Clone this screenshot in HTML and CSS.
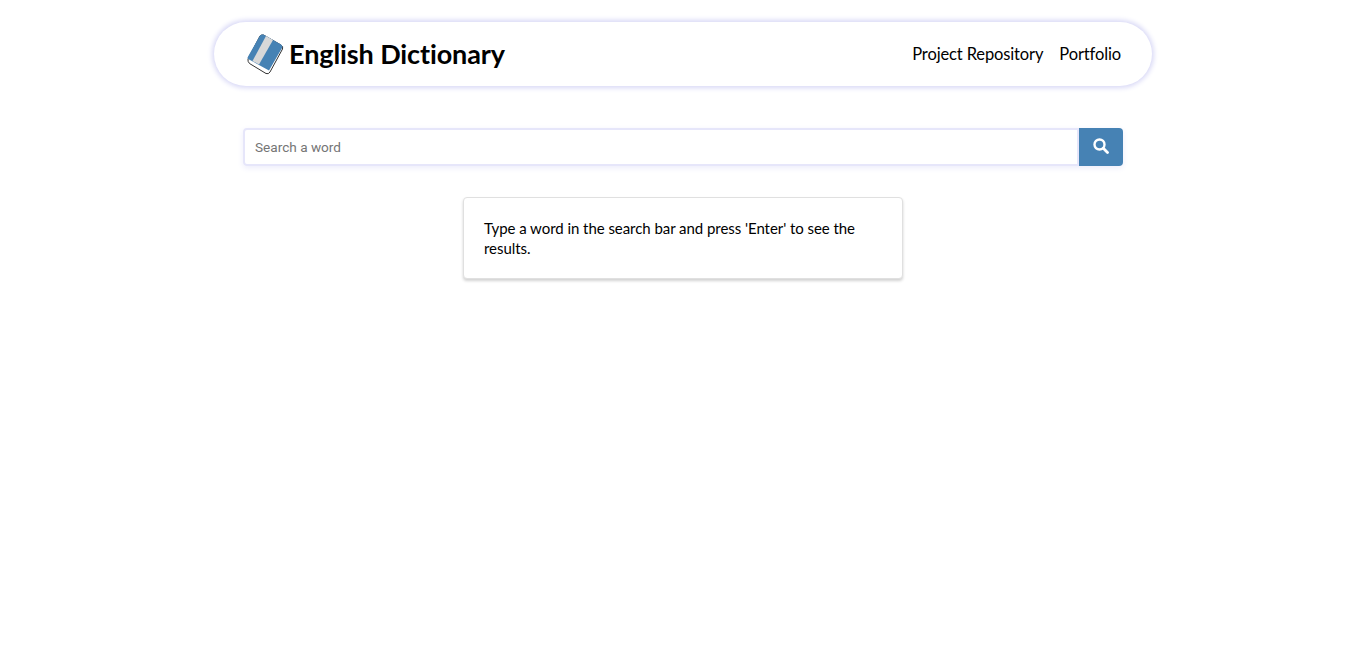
FILE: index.html
```html
<!DOCTYPE html>
<html lang="en">
<head>
<meta charset="utf-8">
<title>English Dictionary</title>
<link rel="stylesheet" href="styles.css">
</head>
<body>
<div class="page">
  <header class="header">
    <div class="brand">
      <svg class="logo" width="37" height="41" viewBox="0 0 37 41" aria-hidden="true">
        <path d="M1 25 L13 2 Q14.500 0.500 16.500 1 L34 11 Q36.500 12.500 35.500 15 L23 38 Q21.500 40.500 19 39.500 L2.500 29.500 Q0.500 27.500 1 25Z" fill="#fff" stroke="#333" stroke-width="1"/>
        <path d="M0.500 23.500 L13 1.500 Q14.500 0 16.500 0.500 L34 10.500 Q36 12 35 14 L22 36.500 L3 26 Q0.500 25 0.500 23.500Z" fill="#4682b4"/>
        <path d="M19 2 L26 6 L12 30.500 L5.500 27Z" fill="#d8d8d8"/>
      </svg>
      <h1 class="title">English Dictionary</h1>
    </div>
    <nav class="nav">
      <a class="nav-link" href="#">Project Repository</a>
      <a class="nav-link" href="#">Portfolio</a>
    </nav>
  </header>
  <form class="search">
    <input class="search-input" type="text" placeholder="Search a word">
    <button class="search-button" type="button" aria-label="Search">
      <svg width="16" height="16" viewBox="0 0 16 16" aria-hidden="true">
        <circle cx="6.500" cy="6.500" r="5" fill="none" stroke="#fff" stroke-width="2.400"/>
        <path d="M10.300 10.300 L14.500 14.500" stroke="#fff" stroke-width="2.800" stroke-linecap="round"/>
      </svg>
    </button>
  </form>
  <section class="card">
    <p class="card-text">Type a word in the search bar and press 'Enter' to see the results.</p>
  </section>
</div>
</body>
</html>
```
FILE: styles.css
```css
* { box-sizing: border-box; }
html, body { margin: 0; height: 100%; background: #fff; }
body { font-family: Lato, "Open Sans", sans-serif; color: #000; }
.page {
  width: 938px;
  margin-left: 214px;
  padding-top: 22px;
  display: flex;
  flex-direction: column;
  align-items: center;
}
.header {
  width: 100%;
  height: 64px;
  border-radius: 32px;
  background: #fff;
  box-shadow: 0 0 5px 2px #d8d8f6;
  padding: 0 31px 0 33px;
  display: flex;
  align-items: center;
  justify-content: space-between;
}
.brand { display: flex; align-items: center; gap: 5px; }
.logo { display: block; flex: none; }
.title { margin: 0; font-size: 27px; font-weight: 700; line-height: 32px; letter-spacing: -0.100px; }
.nav { display: flex; gap: 16px; margin-top: -1px; }
.nav-link { color: #000; text-decoration: none; font-size: 16.500px; line-height: 20px; letter-spacing: -0.130px; }
.search {
  width: 880px;
  height: 38px;
  margin-top: 42px;
  display: flex;
  box-shadow: 0 2px 6px #ececfb;
  border-radius: 4px;
}
.search-input {
  flex: 1;
  min-width: 0;
  height: 38px;
  border: 2px solid #e6e6fa;
  border-radius: 4px 0 0 4px;
  background: #fff;
  padding: 0 10px;
  font-family: Roboto, sans-serif;
  font-size: 13.600px;
  outline: none;
}
.search-input::placeholder { color: #757575; opacity: 1; }
.search-button {
  width: 44px;
  height: 38px;
  border: 0;
  padding: 0 0 2px;
  background: #4682b4;
  border-radius: 0 4px 4px 0;
  display: flex;
  align-items: center;
  justify-content: center;
}
.card {
  width: 440px;
  height: 82px;
  margin-top: 31px;
  border: 1px solid #e0e0e0;
  border-radius: 4px;
  background: #fff;
  box-shadow: 0 2px 3px rgba(0, 0, 0, 0.18);
  padding: 20px;
}
.card-text { margin: 0; font-size: 15px; line-height: 20px; letter-spacing: -0.050px; }
```
